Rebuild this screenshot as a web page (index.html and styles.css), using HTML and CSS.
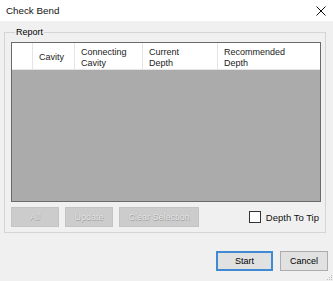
FILE: index.html
```html
<!DOCTYPE html>
<html>
<head>
<meta charset="utf-8">
<link rel="stylesheet" href="styles.css">
</head>
<body>
<div class="window">
  <div class="titlebar">
    <span class="title">Check Bend</span>
    <svg class="close" width="10" height="10" viewBox="0 0 10 10"><path d="M0.5 0.5 L9.5 9.5 M9.5 0.5 L0.5 9.5" stroke="#111" stroke-width="1" fill="none"/></svg>
  </div>
  <fieldset class="group">
    <legend>Report</legend>
    <div class="list">
      <div class="header">
        <div class="col c0"></div>
        <div class="col c1">Cavity</div>
        <div class="col c2">Connecting<br>Cavity</div>
        <div class="col c3">Current<br>Depth</div>
        <div class="col c4">Recommended<br>Depth</div>
      </div>
      <div class="body"></div>
    </div>
    <div class="row">
      <button class="btn dis b-all">All</button>
      <button class="btn dis b-upd">Update</button>
      <button class="btn dis b-clr">Clear Selection</button>
      <label class="check"><span class="box"></span>Depth To Tip</label>
    </div>
  </fieldset>
  <div class="footer">
    <button class="btn def b-start">Start</button>
    <button class="btn b-cancel">Cancel</button>
  </div>
  <svg class="grip" width="8" height="8" viewBox="0 0 8 8">
    <rect x="6" y="2" width="1" height="1" fill="#bbb"/>
    <rect x="4" y="4" width="1" height="1" fill="#bbb"/>
    <rect x="6" y="4" width="1" height="1" fill="#bbb"/>
    <rect x="2" y="6" width="1" height="1" fill="#bbb"/>
    <rect x="4" y="6" width="1" height="1" fill="#bbb"/>
    <rect x="6" y="6" width="1" height="1" fill="#bbb"/>
  </svg>
</div>
</body>
</html>
```
FILE: styles.css
```css
* { box-sizing: border-box; }
html, body { margin: 0; padding: 0; }
body {
  width: 333px; height: 281px; overflow: hidden;
  background: #f0f0f0;
  font-family: "Liberation Sans", Arial, sans-serif;
  font-size: 9px; color: #000;
}
.window { position: relative; width: 333px; height: 281px; display: flex; flex-direction: column; }
.titlebar {
  height: 21px; background: #fff;
  display: flex; align-items: center; justify-content: space-between;
  padding: 0 7px 0 6px;
}
.title { font-size: 9.8px; color: #111; }
.close { display: block; }
.group {
  margin: 6px 7px 0 4px;
  padding: 4px 4px 5px 6px;
  border: 1px solid #d5d5d5;
  height: 206px;
}
.group legend {
  padding: 0 1px; margin-left: 4px;
  font-size: 9px; line-height: 10px;
}
.list {
  margin-top: 1px;
  height: 160px;
  border: 1px solid #6a6a6a;
  background: #ababab;
  display: flex; flex-direction: column;
}
.header {
  height: 27px; background: #fff;
  display: flex;
  border-bottom: 1px solid #e5e5e5;
}
.col {
  padding: 4px 0 0 6px;
  line-height: 10.5px;
  border-right: 1px solid #e5e5e5;
  color: #222;
}
.col.c1 { padding-top: 9px; }
.c0 { width: 21px; }
.c1 { width: 42px; }
.c2 { width: 68px; }
.c3 { width: 75px; }
.c4 { flex: 1; border-right: none; }
.body { flex: 1; }
.row {
  margin-top: 5px;
  display: flex; align-items: center;
}
.btn {
  font-family: "Liberation Sans", Arial, sans-serif;
  font-size: 9px;
  height: 20px; padding: 0;
  background: #e1e1e1; border: 1px solid #adadad; color: #000;
}
.btn.dis {
  background: #cccccc; border-color: #c4c4c4;
  color: #e8e8e8;
  text-shadow: 0.6px 0.6px 0 #a2a2a2, -0.4px -0.4px 0 #b4b4b4;
}
.b-all { width: 48px; }
.b-upd { width: 48px; margin-left: 6px; }
.b-clr { width: 80px; margin-left: 6px; }
.check {
  margin-left: auto; margin-right: 2px;
  display: flex; align-items: center; gap: 5px;
  font-size: 9.5px; color: #111;
}
.box {
  width: 12px; height: 12px; background: #fff;
  border: 1px solid #333;
}
.footer {
  display: flex; justify-content: flex-end; gap: 7px;
  padding: 18px 5px 0 0;
}
.b-start { width: 57px; border: 2px solid #3f8ad2; }
.b-cancel { width: 48px; }
.grip { position: absolute; right: 0; bottom: 0; }
```
